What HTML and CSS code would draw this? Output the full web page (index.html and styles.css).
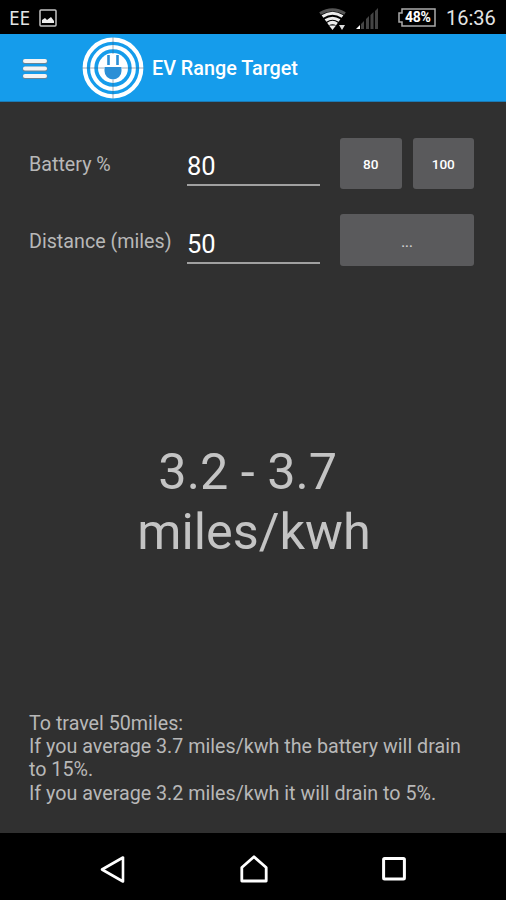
FILE: index.html
```html
<!DOCTYPE html>
<html lang="en">
<head>
    <meta charset="utf-8">
    <title>EV Range Target</title>
    <link rel="stylesheet" href="styles.css">
</head>
<body>
    <div class="status">
        <span class="carrier">EE</span>
        <svg class="picture" width="18" height="18" viewBox="0 0 18 18">
            <rect x="1" y="1" width="16" height="16" rx="1" fill="none" stroke="#c4c4c4" stroke-width="1.5"/>
            <path d="M3 14v-3l3-2 2 2 4-3 3 4v2z" fill="#eee"/>
        </svg>
        <svg class="wifi" width="28" height="23" viewBox="0 0 28 23">
            <path d="M1 5.500Q13.500-2 26 5.500" fill="none" stroke="#555" stroke-width="3"/>
            <path d="M3.500 8.500Q13.500 2 23.500 8.500M6.500 12.500Q13.500 8 20.500 12.500M9 16Q13.500 13 18 16" fill="none" stroke="#eee" stroke-width="3.200"/>
            <path d="M10 17.500h7L13.500 22z" fill="#eee"/>
            <path d="M20 17h6l-3 5z" fill="#ddd"/>
        </svg>
        <svg class="signal" width="23" height="22" viewBox="0 0 23 22">
            <path d="M5 21v-5l3-3v8zM10 21v-10l3-3v13zM14.500 21V7l3-3v17zM19 21V3l3-3v21z" fill="#444"/>
            <path d="M0 21l4-4v4z" fill="#fff"/>
        </svg>
        <div class="battery">
            <svg width="40" height="20" viewBox="0 0 40 20">
                <path d="M5 1h33v17H5v-4H2V5h3z" fill="none" stroke="#aaa" stroke-width="1.500"/>
            </svg>
            <span>48%</span>
        </div>
        <span class="clock">16:36</span>
    </div>

    <div class="appbar">
        <svg class="menu" width="26" height="22" viewBox="0 0 26 22">
            <path d="M3 3.500h20M3 11h20M3 18.500h20" stroke="#6b8596" stroke-width="5" stroke-linecap="round"/>
            <path d="M3 3h20M3 10.500h20M3 18h20" stroke="#f4f4f4" stroke-width="4" stroke-linecap="round"/>
        </svg>
        <svg class="logo" width="62" height="62" viewBox="0 0 62 62">
            <circle cx="31" cy="31" r="28.300" fill="none" stroke="#fff" stroke-width="4.200"/>
            <circle cx="31" cy="31" r="20.800" fill="none" stroke="#fff" stroke-width="4.200"/>
            <circle cx="31" cy="31" r="15" fill="#fff"/>
            <path d="M26.500 18v10M35.500 18v10" stroke="#2b8fd6" stroke-width="2.600"/>
            <path d="M22.500 30h17v4a8.500 8.500 0 0 1-17 0z" fill="#2b8fd6"/>
            <path d="M31 0v17M31 43v19M0 31h22M40 31h22" stroke="#45627c" stroke-width="1" opacity=".5"/>
        </svg>
        <h1>EV Range Target</h1>
    </div>

    <div class="content">
        <div class="form">
            <label for="battery">Battery %</label>
            <input type="text" id="battery" value="80">
            <div class="buttons">
                <button>80</button>
                <button>100</button>
            </div>
            <label for="distance">Distance (miles)</label>
            <input type="text" id="distance" value="50">
            <div class="buttons">
                <button class="more">...</button>
            </div>
        </div>
        <div class="result">3.2 - 3.7 
miles/kwh</div>
        <p class="details">
            To travel 50miles:<br>
            If you average 3.7 miles/kwh the battery will drain<br>
            to 15%.<br>
            If you average 3.2 miles/kwh it will drain to 5%.
        </p>
    </div>

    <div class="navbar">
        <svg width="28" height="30" viewBox="0 0 28 30">
            <path d="M3 15.500L24 3.500v24z" fill="none" stroke="#fff" stroke-width="2.600" stroke-linejoin="round"/>
        </svg>
        <svg width="30" height="30" viewBox="0 0 30 30">
            <path d="M2.800 27V13.500L15 2.800l12.200 10.700V27z" fill="none" stroke="#fff" stroke-width="2.800" stroke-linejoin="round"/>
        </svg>
        <svg width="26" height="26" viewBox="0 0 26 26">
            <rect x="2.600" y="2.600" width="20.800" height="20.400" rx="1" fill="none" stroke="#fff" stroke-width="3"/>
        </svg>
    </div>
</body>
</html>
```

FILE: styles.css
```css
* {
    box-sizing: border-box;
}

body {
    margin: 0;
    height: 900px;
    display: flex;
    flex-direction: column;
    background-color: #303030;
    color: #b8b8b8;
    font-family: Roboto, sans-serif;
    font-size: 19.7px;
    overflow: hidden;
}

svg {
    display: block;
    flex: none;
}

.status {
    height: 34px;
    display: flex;
    align-items: center;
    padding: 2px 10px 0 9px;
    background-color: #000;
    color: #e4e4e4;
}

.carrier {
    font-family: "Noto Sans", sans-serif;
    font-size: 19px;
    width: 30px;
}

.wifi {
    margin-left: auto;
    margin-top: 2px;
}

.signal {
    margin-left: 9px;
    margin-top: 1px;
}

.battery {
    position: relative;
    margin-left: 18px;
}

.battery span {
    position: absolute;
    left: 8px;
    top: 1px;
    font-size: 14px;
    line-height: 16px;
    font-weight: bold;
    letter-spacing: -0.3px;
    color: #fff;
}

.clock {
    width: 50px;
    margin-left: 9px;
    font-size: 20px;
    white-space: nowrap;
}

.appbar {
    height: 68px;
    display: flex;
    align-items: center;
    padding-left: 22px;
    background-color: #159ceb;
    border-bottom: 1px solid #1b7ab5;
}

.menu {
    margin-top: 2px;
}

.logo {
    margin-left: 34px;
}

h1 {
    margin: 2px 0 0 8px;
    font-size: 19.8px;
    font-weight: 500;
    color: #fff;
}

.content {
    height: 731px;
    display: flex;
    flex-direction: column;
    padding: 36px 28px 28px;
}

.form {
    display: grid;
    grid-template-columns: 159px 133px 154px;
    grid-template-rows: 51px 52px;
    row-gap: 25px;
}

label {
    align-self: center;
    padding: 2px 0 0 1px;
    white-space: nowrap;
}

input {
    width: 133px;
    height: 38px;
    margin-top: 10px;
    padding: 0;
    border: 0;
    border-bottom: 2px solid #a0a0a0;
    background: none;
    color: #fff;
    font-family: inherit;
    font-size: 25.5px;
}

#distance {
    margin-top: 12px;
}

.buttons {
    display: flex;
    gap: 11px;
    width: 134px;
    margin-left: 20px;
}

button {
    flex: 1;
    padding: 0;
    border: 0;
    border-radius: 3px;
    background-color: #5a5a5c;
    color: #fff;
    font-family: inherit;
    font-size: 13.6px;
    font-weight: 500;
}

.more {
    padding-top: 3px;
    color: #d0d0d0;
}

.result {
    margin-top: 176px;
    padding-left: 2px;
    font-size: 50.4px;
    line-height: 60px;
    text-align: center;
    white-space: pre;
    color: #c4c4c4;
}

.details {
    margin: auto 0 0 1px;
    line-height: 23.3px;
    white-space: nowrap;
}

.navbar {
    height: 67px;
    display: flex;
    align-items: center;
    justify-content: space-between;
    padding: 4px 99px 0 99px;
    background-color: #000;
}
```
